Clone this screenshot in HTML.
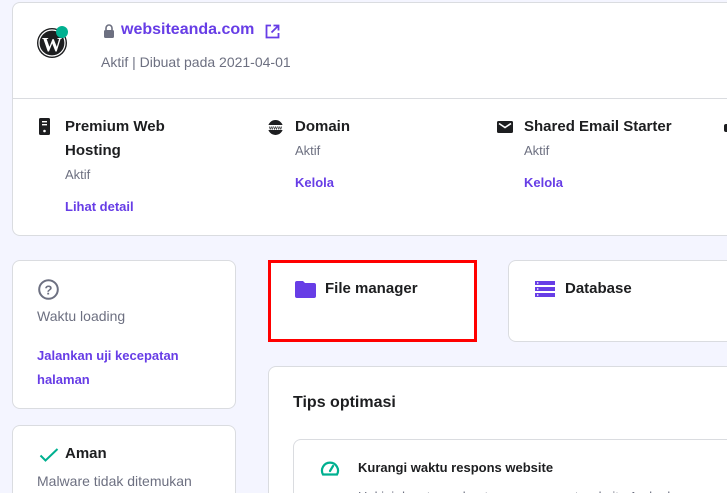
<!DOCTYPE html>
<html style="width:727px;height:493px;overflow:hidden"><head><meta charset="utf-8"><style>
*{box-sizing:border-box;margin:0;padding:0}
body{width:727px;height:493px;overflow:hidden;background:#f4f5ff;font-family:"Liberation Sans",sans-serif;position:relative;color:#1d1e20}
.card{position:absolute;background:#fff;border:1px solid #dadce0;border-radius:8px}
.t{position:absolute;white-space:nowrap}
.b{font-weight:bold;font-size:15px;color:#1d1e20}
.g{font-size:14px;color:#6d7081}
.l{font-weight:bold;font-size:13px;color:#673de6}
</style></head><body>
<div class="card" style="left:12px;top:2px;width:725px;height:234px;border-right:none;border-radius:8px 0 0 8px"></div>
<div style="position:absolute;left:13px;top:98px;width:714px;height:1px;background:#dadce0"></div>
<svg style="position:absolute;left:37px;top:25px" width="34" height="34" viewBox="0 0 34 34"><circle cx="15" cy="18" r="15" fill="#1d1e20"/><circle cx="15" cy="18" r="13" fill="none" stroke="#fff" stroke-width="1.2"/><text x="15" y="26" font-family="Liberation Serif" font-weight="bold" font-size="20" fill="#fff" text-anchor="middle">W</text><circle cx="25" cy="7" r="6" fill="#00b090"/></svg>
<svg style="position:absolute;left:103px;top:24px" width="12" height="14" viewBox="0 0 12 14"><rect x="1" y="6" width="10" height="8" rx="1.5" fill="#6d7081"/><path d="M3 6V4a3 3 0 0 1 6 0v2" stroke="#6d7081" stroke-width="1.6" fill="none"/></svg>
<div class="t" style="left:121px;top:21px;font-size:16px;font-weight:bold;color:#673de6">websiteanda.com</div>
<svg style="position:absolute;left:265px;top:24px" width="15" height="15" viewBox="0 0 15 15" fill="none" stroke="#673de6" stroke-width="1.8"><path d="M6 1.5H1.5v12h12V9"/><path d="M8.5 1.5h5v5M13.5 1.5L6.5 8.5"/></svg>
<div class="t g" style="left:101px;top:54px">Aktif | Dibuat pada 2021-04-01</div>

<svg style="position:absolute;left:39px;top:118px" width="11" height="17" viewBox="0 0 11 17"><rect width="11" height="17" rx="1.5" fill="#1d1e20"/><rect x="3" y="3" width="5" height="1.4" fill="#fff"/><rect x="3" y="6" width="5" height="1.4" fill="#fff"/><circle cx="5.5" cy="13" r="1.3" fill="#fff"/></svg>
<div class="t b" style="left:65px;top:118px">Premium Web</div>
<div class="t b" style="left:65px;top:142px">Hosting</div>
<div class="t g" style="left:65px;top:167px;font-size:13px">Aktif</div>
<div class="t l" style="left:65px;top:199px">Lihat detail</div>

<svg style="position:absolute;left:267px;top:120px" width="17" height="15" viewBox="0 0 17 15"><circle cx="8.5" cy="7.5" r="7.5" fill="#1d1e20"/><rect x="0" y="5" width="17" height="5" fill="#fff"/><text x="8.5" y="9.5" font-size="5.5" font-weight="bold" text-anchor="middle" fill="#1d1e20">www</text></svg>
<div class="t b" style="left:295px;top:118px">Domain</div>
<div class="t g" style="left:295px;top:143px;font-size:13px">Aktif</div>
<div class="t l" style="left:295px;top:175px">Kelola</div>

<svg style="position:absolute;left:497px;top:121px" width="16" height="12" viewBox="0 0 16 12"><rect width="16" height="12" rx="1.5" fill="#1d1e20"/><path d="M2 2.5l6 4 6-4" stroke="#fff" stroke-width="1.6" fill="none"/></svg>
<div class="t b" style="left:524px;top:118px">Shared Email Starter</div>
<div class="t g" style="left:524px;top:143px;font-size:13px">Aktif</div>
<div class="t l" style="left:524px;top:175px">Kelola</div>
<div style="position:absolute;left:724px;top:124px;width:3px;height:8px;border-radius:2px 0 0 2px;background:#1d1e20"></div>

<div class="card" style="left:12px;top:260px;width:224px;height:149px"></div>
<svg style="position:absolute;left:38px;top:279px" width="21" height="21" viewBox="0 0 21 21"><circle cx="10.5" cy="10.5" r="9.3" fill="none" stroke="#6d7081" stroke-width="2"/><text x="10.5" y="15.5" font-size="13" font-weight="bold" text-anchor="middle" fill="#6d7081">?</text></svg>
<div class="t g" style="left:37px;top:308px;font-size:14px">Waktu loading</div>
<div class="t l" style="left:37px;top:348px">Jalankan uji kecepatan</div>
<div class="t l" style="left:37px;top:372px">halaman</div>

<div class="card" style="left:12px;top:425px;width:224px;height:68px;border-bottom:none;border-radius:8px 8px 0 0"></div>
<svg style="position:absolute;left:39px;top:448px" width="20" height="14" viewBox="0 0 20 14"><path d="M1.5 7.5l5 5L18.5 1" stroke="#00b090" stroke-width="2" fill="none"/></svg>
<div class="t b" style="left:65px;top:445px">Aman</div>
<div class="t g" style="left:37px;top:473px">Malware tidak ditemukan</div>

<div style="position:absolute;left:268px;top:260px;width:209px;height:82px;background:#fff;border:3px solid #f00"></div>
<svg style="position:absolute;left:295px;top:281px" width="21" height="17" viewBox="0 0 21 17"><path d="M0 2a2 2 0 0 1 2-2h6l2 2h9a2 2 0 0 1 2 2v11a2 2 0 0 1-2 2H2a2 2 0 0 1-2-2z" fill="#673de6"/></svg>
<div class="t b" style="left:325px;top:280px">File manager</div>

<div class="card" style="left:508px;top:260px;width:219px;height:82px;border-right:none;border-radius:8px 0 0 8px"></div>
<svg style="position:absolute;left:535px;top:281px" width="20" height="16" viewBox="0 0 20 16" fill="#673de6"><rect y="0" width="20" height="4"/><rect y="6" width="20" height="4"/><rect y="12" width="20" height="4"/><rect x="2" y="1.3" width="1.4" height="1.4" fill="#fff"/><rect x="2" y="7.3" width="1.4" height="1.4" fill="#fff"/><rect x="2" y="13.3" width="1.4" height="1.4" fill="#fff"/></svg>
<div class="t b" style="left:565px;top:280px">Database</div>

<div class="card" style="left:268px;top:366px;width:459px;height:127px;border-right:none;border-bottom:none;border-radius:8px 0 0 0"></div>
<div class="t b" style="left:293px;top:394px;font-size:16px">Tips optimasi</div>
<div class="card" style="left:293px;top:439px;width:434px;height:54px;border-right:none;border-bottom:none;border-radius:8px 0 0 0"></div>
<svg style="position:absolute;left:320px;top:460px" width="20" height="16" viewBox="0 0 20 16" fill="none" stroke="#00b090" stroke-width="2.2"><path d="M3 14.5A8 8 0 1 1 17 14.5Z"/><path d="M10 11l3-5" stroke-linecap="round"/></svg>
<div class="t" style="left:358px;top:460px;font-size:13px;font-weight:bold">Kurangi waktu respons website</div>
<div style="position:absolute;left:358px;top:486px;width:369px;height:7px;overflow:hidden"><div class="t g" style="left:0;top:3px;font-size:13px">Hal ini dapat membantu mempercepat website Anda dan</div></div>
</body></html>
